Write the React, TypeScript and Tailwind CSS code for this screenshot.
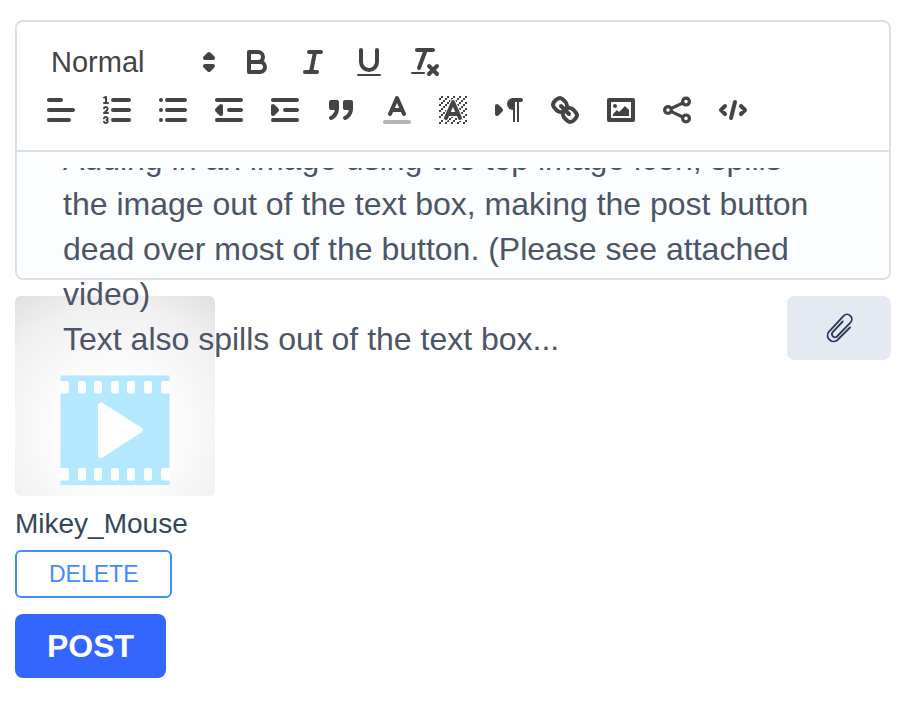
import React, { useState } from "react";

const S = {
  fill: "none",
  stroke: "#444",
  strokeWidth: 2,
  strokeLinecap: "round",
  strokeLinejoin: "round",
} as const;
const THIN = { ...S, strokeWidth: 1 } as const;
const FILLED = { ...S, fill: "#444" } as const;

// hatch squares of the background colour icon
const hatch: [number, number][] = [];
for (let y = 2; y <= 15; y++) {
  for (let x = 2; x <= 15; x++) {
    if ((x + y) % 3 === 2) hatch.push([x, y]);
  }
}

interface Tool {
  label: string;
  icon: React.ReactNode;
}

const formatTools: Tool[] = [
  {
    label: "Bold",
    icon: (
      <g {...S}>
        <path d="M5,4H9.5A2.5,2.5,0,0,1,12,6.5v0A2.5,2.5,0,0,1,9.5,9H5V4Z" />
        <path d="M5,9h5.5A2.5,2.5,0,0,1,13,11.5v0A2.5,2.5,0,0,1,10.5,14H5V9Z" />
      </g>
    ),
  },
  {
    label: "Italic",
    icon: <path {...S} d="M7 4h6M5 14h6M8 14L10 4" />,
  },
  {
    label: "Underline",
    icon: (
      <>
        <path {...S} d="M5,3V9a4.012,4.012,0,0,0,4,4H9a4.012,4.012,0,0,0,4-4V3" />
        <rect fill="#444" height="1" rx="0.5" width="12" x="3" y="15" />
      </>
    ),
  },
  {
    label: "Clear formatting",
    icon: (
      <>
        <path {...S} d="M5 3h8M6 12L9.35 3M11 11l4 4M15 11l-4 4" />
        <rect fill="#444" height="1" rx="0.5" width="7" x="2" y="14" />
      </>
    ),
  },
];

const blockTools: Tool[] = [
  { label: "Align", icon: <path {...S} d="M3 9h12M3 14h10M3 4h6" /> },
  {
    label: "Ordered list",
    icon: (
      <>
        <path {...S} d="M7 4h8M7 9h8M7 14h8" />
        <path {...THIN} d="M2.5 5.5h2" />
        <path
          fill="#444"
          d="M3.5,6A0.5,0.5,0,0,1,3,5.5V3.085l-0.276.138A0.5,0.5,0,0,1,2.053,3c-0.124-.247-0.023-0.324.224-0.447l1-.5A0.5,0.5,0,0,1,4,2.5v3A0.5,0.5,0,0,1,3.5,6Z"
        />
        <path {...THIN} d="M4.5,10.5h-2c0-.234,1.85-1.076,1.85-2.234A0.959,0.959,0,0,0,2.5,8.156" />
        <path
          {...THIN}
          d="M2.5,14.846a0.959,0.959,0,0,0,1.85-.109A0.7,0.7,0,0,0,3.75,14a0.688,0.688,0,0,0,.6-0.736,0.959,0.959,0,0,0-1.85-.109"
        />
      </>
    ),
  },
  {
    label: "Bullet list",
    icon: <path {...S} d="M6 4h9M6 9h9M6 14h9M3 4h0M3 9h0M3 14h0" />,
  },
  {
    label: "Outdent",
    icon: (
      <>
        <path {...S} d="M3 14h12M3 4h12M9 9h6" />
        <polygon {...FILLED} points="5 7 5 11 3 9" />
      </>
    ),
  },
  {
    label: "Indent",
    icon: (
      <>
        <path {...S} d="M3 14h12M3 4h12M9 9h6" />
        <polygon {...FILLED} points="3 7 3 11 5 9" />
      </>
    ),
  },
  {
    label: "Quote",
    icon: (
      <g {...FILLED}>
        <rect height="3" width="3" x="4" y="5" />
        <rect height="3" width="3" x="11" y="5" />
        <path fill="none" d="M7,8c0,4.031-3,5-3,5" />
        <path fill="none" d="M14,8c0,4.031-3,5-3,5" />
      </g>
    ),
  },
  {
    label: "Text color",
    icon: (
      <>
        <path {...S} opacity="0.4" d="M3 15h12" />
        <path {...S} d="M5.5 11L9 3l3.5 8M11.63 9H6.38" />
      </>
    ),
  },
  {
    label: "Background color",
    icon: (
      <>
        {hatch.map(([x, y]) => (
          <rect key={`${x}-${y}`} fill="#444" width="1" height="1" x={x} y={y} />
        ))}
        <path {...S} stroke="#fff" strokeWidth="3" d="M5.5 13L9 5l3.5 8M11.63 11H6.38" />
        <path fill="#fff" d="M9 5l2.63 6H6.38z" />
        <path {...S} d="M5.5 13L9 5l3.5 8M11.63 11H6.38" />
      </>
    ),
  },
  {
    label: "Text direction",
    icon: (
      <>
        <polygon {...FILLED} points="3 11 5 9 3 7" />
        <path {...S} d="M15 4h-4" />
        <path fill="#444" d="M11,3a3,3,0,0,0,0,6h1V3H11Z" />
        <path fill="#444" d="M11 4h1v11h-1zM13 4h1v11h-1z" />
      </>
    ),
  },
  {
    label: "Link",
    icon: (
      <g {...S}>
        <path d="M7 7l4 4" />
        <path d="M8.9,4.577a3.476,3.476,0,0,1,.36,4.679A3.476,3.476,0,0,1,4.577,8.9C3.185,7.5,2.035,6.4,4.217,4.217S7.5,3.185,8.9,4.577Z" />
        <path d="M13.423,9.1a3.476,3.476,0,0,0-4.679-.36,3.476,3.476,0,0,0,.36,4.679c1.392,1.392,2.5,2.542,4.679.36S14.815,10.5,13.423,9.1Z" />
      </g>
    ),
  },
  {
    label: "Image",
    icon: (
      <>
        <rect {...S} height="10" width="12" x="3" y="4" />
        <circle fill="#444" cx="6" cy="7" r="1" />
        <polygon fill="#444" points="5 12 5 11 7 9 8 10 11 7 13 9 13 12" />
      </>
    ),
  },
  {
    label: "Share",
    icon: (
      <g {...S} strokeWidth="1.6">
        <path d="M6.2 8.2l5.7-2.7M6.2 9.8l5.7 2.7" />
        <circle cx="4.5" cy="9" r="1.7" />
        <circle cx="13.5" cy="4.8" r="1.7" />
        <circle cx="13.5" cy="13.2" r="1.7" />
      </g>
    ),
  },
  {
    label: "Code",
    icon: <path {...S} d="M5 7L3 9l2 2M13 7l2 2-2 2M10 5L8 13" />,
  },
];

function ToolButton({ label, icon }: Tool) {
  return (
    <button type="button" aria-label={label} className="flex h-12 w-14 items-center justify-center">
      <svg viewBox="0 0 18 18" className="h-9 w-9">
        {icon}
      </svg>
    </button>
  );
}

function FilmThumbnail() {
  const holes = [63, 79, 96, 112, 129];
  return (
    <div
      role="img"
      aria-label="Attached video"
      className="h-50 w-50 overflow-hidden rounded-md bg-[radial-gradient(circle_at_50%_67%,#ffffff_0%,#fbfbfb_40%,#f0f0f0_75%,#e0e0e0_100%)]"
    >
      <svg viewBox="0 0 200 200" className="h-full w-full">
        <rect x="45.5" y="79.5" width="109" height="109.5" fill="#b3e8ff" />
        {[85, 172].map((y) => (
          <g key={y} fill="#fcfdfe">
            <path d={`M45 ${y}h7a2 2 0 0 1 2 2v8.5a2 2 0 0 1-2 2h-7z`} />
            {holes.map((x) => (
              <rect key={x} x={x} y={y} width="8" height="12.5" rx="2" />
            ))}
            <path d={`M155 ${y}h-7a2 2 0 0 0-2 2v8.5a2 2 0 0 0 2 2h7z`} />
          </g>
        ))}
        <path d="M86 109.5v49.5L124.5 134z" fill="#fff" stroke="#fff" strokeWidth="6" strokeLinejoin="round" />
      </svg>
    </div>
  );
}

export default function App() {
  const [format, setFormat] = useState("normal");

  return (
    <main className="flex flex-col items-start bg-white pt-5 pr-[29px] pb-9 pl-[15px] font-['Liberation_Sans',Arial,sans-serif]">
      <section className="w-full rounded-lg border-2 border-[#dbe0e6]">
        <div role="toolbar" aria-label="Formatting" className="p-4">
          <div className="flex flex-wrap">
            <div className="relative mr-0.5 flex h-12 w-[194px] items-center text-[#444]">
              <select
                aria-label="Paragraph style"
                value={format}
                onChange={(e) => setFormat(e.target.value)}
                className="h-full w-full appearance-none bg-transparent pt-0.5 pl-[18px] text-[29px] font-medium outline-none"
              >
                <option value="normal">Normal</option>
                <option value="heading">Heading</option>
              </select>
              <svg viewBox="0 0 18 18" className="pointer-events-none absolute right-0 h-9 w-9">
                <polygon {...FILLED} points="7 11 9 13 11 11" />
                <polygon {...FILLED} points="7 7 9 5 11 7" />
              </svg>
            </div>
            {formatTools.map((tool) => (
              <ToolButton key={tool.label} {...tool} />
            ))}
          </div>
          <div className="flex flex-wrap">
            {blockTools.map((tool) => (
              <ToolButton key={tool.label} {...tool} />
            ))}
          </div>
        </div>

        {/* content is cut off at the top but runs out past the bottom edge */}
        <div className="h-32 rounded-b-md border-t-2 border-[#dbe0e6] bg-[#fbfdff] pt-4">
          <div
            role="textbox"
            aria-label="Post"
            aria-multiline="true"
            contentEditable
            suppressContentEditableWarning
            className="relative z-10 flow-root h-full pr-15 pl-[46px] text-[32px] leading-[45px] text-[#4b5567] outline-none [clip-path:inset(0_0_-120px_0)]"
          >
            <p className="-mt-[31px]">
              Adding in an image using the top image icon, spills the image out of the text box, making the post
              button dead over most of the button. (Please see attached video)
            </p>
            <p>Text also spills out of the text box...</p>
          </div>
        </div>
      </section>

      <div className="mt-4 flex w-full items-start justify-between">
        <div className="flex flex-col items-start">
          <FilmThumbnail />
          <span className="mt-2 text-[28px] leading-10 text-[#34475a]">Mikey_Mouse</span>
          <button
            type="button"
            className="mt-1.5 h-12 rounded-md border-2 border-[#428bff] px-8 text-[23px] leading-6 text-[#428bff]"
          >
            DELETE
          </button>
        </div>
        <button
          type="button"
          aria-label="Attach file"
          className="flex h-16 w-26 items-center justify-center rounded-lg bg-[#e4e9f2]"
        >
          <svg
            viewBox="0 0 32 32"
            className="h-8 w-8"
            fill="none"
            stroke="#2f3a63"
            strokeWidth="1.9"
            strokeLinecap="round"
          >
            <path d="M27 15.5L14.2 28.2A6 6 0 0 1 5.8 19.8L20.6 3.8A4.8 4.8 0 0 1 27.4 10.6L14 24.5A3.05 3.05 0 0 1 9.7 20.2L19.7 9.5" />
          </svg>
        </button>
      </div>

      <button type="button" className="mt-4 h-16 rounded-lg bg-[#3366ff] px-8 text-[32px] font-bold text-white">
        POST
      </button>
    </main>
  );
}
